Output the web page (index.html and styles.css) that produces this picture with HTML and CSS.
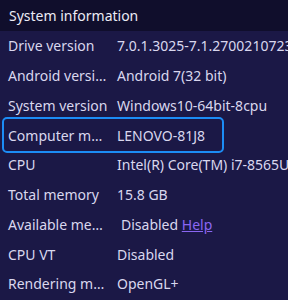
FILE: index.html
```html
<!DOCTYPE html>
<html>
<head>
<meta charset="utf-8">
<link rel="stylesheet" href="styles.css">
</head>
<body>
<div class="panel">
  <div class="header">System information</div>
  <div class="rows">
    <div class="row"><div class="label">Drive version</div><div class="value">7.0.1.3025-7.1.2700210723</div></div>
    <div class="row"><div class="label">Android version</div><div class="value">Android 7(32 bit)</div></div>
    <div class="row"><div class="label">System version</div><div class="value">Windows10-64bit-8cpu</div></div>
    <div class="row selected"><div class="label">Computer model</div><div class="value">LENOVO-81J8</div></div>
    <div class="row"><div class="label">CPU</div><div class="value">Intel(R) Core(TM) i7-8565U CPU</div></div>
    <div class="row"><div class="label">Total memory</div><div class="value">15.8 GB</div></div>
    <div class="row"><div class="label">Available memory</div><div class="value indent">Disabled <a class="link" href="#">Help</a></div></div>
    <div class="row"><div class="label">CPU VT</div><div class="value">Disabled</div></div>
    <div class="row"><div class="label">Rendering mode</div><div class="value">OpenGL+</div></div>
  </div>
</div>
</body>
</html>
```
FILE: styles.css
```css
html, body {
  margin: 0;
  padding: 0;
  background: #1b1846;
}
.panel {
  width: 288px;
  height: 300px;
  overflow: hidden;
  font-family: "Noto Sans", "Open Sans", sans-serif;
  color: #d9d7ee;
  background: #1b1846;
}
.header {
  height: 31px;
  background: #100e2c;
  color: #ecebf5;
  font-size: 14px;
  line-height: 31px;
  padding-left: 9px;
  box-sizing: border-box;
}
.rows {
  display: flex;
  flex-direction: column;
}
.row {
  position: relative;
  display: grid;
  grid-template-columns: 109px 1fr;
  height: 29.75px;
  align-items: center;
  font-size: 14px;
  white-space: nowrap;
}
.row.selected::after {
  content: "";
  position: absolute;
  left: 2px;
  width: 222px;
  top: -3px;
  bottom: -3px;
  border: 2px solid #1c8cf5;
  border-radius: 5px;
  box-sizing: border-box;
}
.label {
  padding-left: 8px;
  overflow: hidden;
  text-overflow: ellipsis;
}
.value {
  padding-left: 8px;
  overflow: hidden;
}
.value.indent {
  padding-left: 12px;
}
.link {
  color: #8a66f2;
  text-decoration: underline;
}
```
